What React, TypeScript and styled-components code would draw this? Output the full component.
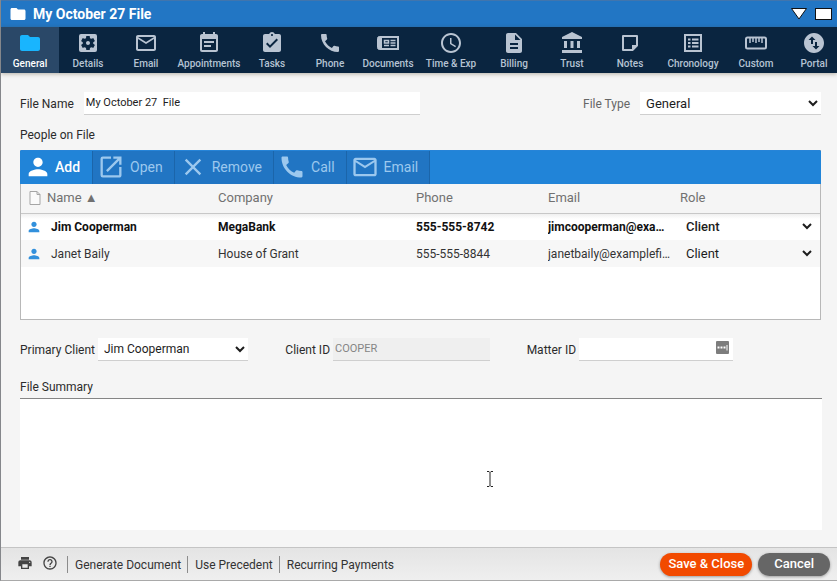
import React from "react";
import styled, { createGlobalStyle, css } from "styled-components";
import {
  MdAccessTime, MdAccountBalance, MdAssignmentTurnedIn, MdCall, MdClose, MdDescription,
  MdEventNote, MdFolder, MdHelpOutline, MdLaunch, MdMailOutline,
  MdPerson, MdPrint, MdSettingsApplications,
  MdSwapVerticalCircle,
} from "react-icons/md";

const GlobalStyle = createGlobalStyle`
  *, *::before, *::after { box-sizing: border-box; }
  body { margin: 0; background: #f5f5f5; }
  body, button, input, select, textarea { font-family: Roboto, "Liberation Sans", sans-serif; }
`;

const Window = styled.div`
  display: flex;
  flex-direction: column;
  min-height: 100vh;
  border-left: 1px solid #85878b;
  border-bottom: 1px solid #a9a9a9;
  background: #f5f5f5;
  color: #2b2b2b;
  font-size: 12px;
  line-height: 16px;
  overflow: hidden;
`;

const TitleBar = styled.header`
  display: flex;
  align-items: center;
  gap: 6px;
  height: 27px;
  padding: 0 5px 0 8px;
  border-top: 1px solid #4175ad;
  background: #2276c4;
  color: #fff;
`;

const Title = styled.h1`
  flex: 1;
  margin: 0;
  font-size: 14px;
  line-height: 20px;
  font-weight: 700;
`;

const WindowButton = styled.button`
  display: flex;
  padding: 0;
  border: 0;
  background: none;
`;

const WindowButtons = styled.div`
  display: flex;
  gap: 7px;
`;

const Nav = styled.nav`
  display: flex;
  height: 46px;
  background: #0a2540;
  box-shadow: 0 1px 4px rgba(60, 50, 20, 0.35);
`;

const NavTab = styled.button<{ $active?: boolean; $wide?: boolean }>`
  display: flex;
  flex: 0 0 ${(p) => (p.$wide ? 68 : 58)}px;
  flex-direction: column;
  align-items: center;
  gap: 2px;
  padding: 4px 0 0;
  border: 0;
  background: ${(p) => (p.$active ? "#2a4868" : "transparent")};
  color: ${(p) => (p.$active ? "#fff" : "#b5c3d3")};
  font-size: 10px;
  line-height: 14px;
  font-weight: 500;
  white-space: nowrap;
  svg {
    width: 24px;
    height: 24px;
    flex: none;
    color: ${(p) => (p.$active ? "#19b5fe" : "#b9c4d2")};
  }
`;

const Form = styled.main`
  display: flex;
  flex: 1;
  flex-direction: column;
  padding: 19px 15px 17px 19px;
`;

const FieldRow = styled.div`
  display: flex;
  align-items: center;
  margin-right: 1px;
`;

const Label = styled.label<{ $muted?: boolean }>`
  color: ${(p) => (p.$muted ? "#666" : "#2b2b2b")};
  white-space: nowrap;
`;

const control = css`
  height: 23px;
  min-width: 0;
  border: 0;
  border-bottom: 1px solid #cfcfcf;
  border-radius: 0;
  outline: 0;
  background: #fff;
  color: #1d1d1d;
`;

const TextInput = styled.input`
  ${control}
  width: 100%;
  padding: 0 2px 2px;
  font-size: 11px;
  &:disabled {
    background: #efefef;
    color: #858585;
  }
`;

const Select = styled.select`
  ${control}
  width: 100%;
  padding: 0 0 0 2px;
  font-size: 12px;
`;

const TypeSelect = styled(Select)`
  font-size: 13px;
`;

const FileField = styled.div`
  display: flex;
  flex: 1;
  align-items: center;
  gap: 10px;
  max-width: 400px;
`;

const TypeField = styled.div`
  display: flex;
  flex: 0 0 238px;
  align-items: center;
  gap: 10px;
  margin-left: auto;
`;

const SectionLabel = styled.h2`
  margin: 12px 0 7px;
  font-size: 12px;
  line-height: 16px;
  font-weight: 400;
`;

const Panel = styled.section`
  min-height: 170px;
  margin-right: 1px;
  border: 1px solid #b8b8b8;
  border-top-color: #2684d8;
  background: #fff;
`;

const Toolbar = styled.div`
  display: flex;
  height: 33px;
  margin: 0 -1px;
  background: #2184d8;
`;

const ToolButton = styled.button<{ $gap: number }>`
  display: flex;
  align-items: center;
  gap: ${(p) => p.$gap}px;
  padding: 0 12px 1px 4px;
  border: 0;
  border-right: 1px solid #1b65aa;
  background: transparent;
  color: #fff;
  font-size: 14px;
  line-height: 18px;
  font-weight: 500;
  svg { width: 28px; height: 28px; }
  &:disabled {
    padding-right: 11px;
    background: #2175c3;
    color: #9cc8ee;
    font-weight: 400;
  }
`;

const Table = styled.table`
  width: 100%;
  border-collapse: collapse;
  table-layout: fixed;
`;

const HeadCell = styled.th<{ $width?: number; $first?: boolean }>`
  width: ${(p) => (p.$width ? `${p.$width}px` : "auto")};
  height: 29px;
  padding: 0 0 1px ${(p) => (p.$first ? 8 : 0)}px;
  border-bottom: 1px solid #c8c8c8;
  background: #f5f5f5;
  color: #717171;
  font-size: 13px;
  font-weight: 400;
  text-align: left;
`;

const NameHead = styled.span`
  display: flex;
  align-items: center;
  gap: 6px;
`;

const Row = styled.tr<{ $primary?: boolean }>`
  background: ${(p) => (p.$primary ? "linear-gradient(#ededed, #fff 6px)" : "#f7f7f7")};
  color: ${(p) => (p.$primary ? "#111" : "#333")};
  font-weight: ${(p) => (p.$primary ? 700 : 400)};
`;

const Cell = styled.td<{ $first?: boolean }>`
  height: 27px;
  padding: 0 9px 0 ${(p) => (p.$first ? 5 : 0)}px;
  overflow: hidden;
  text-overflow: ellipsis;
  white-space: nowrap;
`;

const RoleCell = styled.td`
  padding: 0 5px 0 0;
`;

const RoleSelect = styled(Select)<{ $primary?: boolean }>`
  height: 25px;
  border: 0;
  background: transparent;
  font-size: 13px;
  font-weight: ${(p) => (p.$primary ? 500 : 400)};
`;

const Person = styled.span`
  display: flex;
  align-items: center;
  gap: 9px;
  svg { width: 16px; height: 16px; color: #3290dc; }
`;

const IdRow = styled.div`
  display: grid;
  grid-template-columns: 228fr 204fr 206fr 52fr;
  column-gap: 37px;
  align-items: center;
  margin-top: 18px;
`;

const IdField = styled.div`
  display: flex;
  align-items: center;
  gap: 3px;
  min-width: 0;
`;

const InputWrap = styled.div`
  position: relative;
  flex: 1;
`;

const Autofill = styled.button`
  position: absolute;
  top: 3px;
  right: 4px;
  display: flex;
  padding: 0;
  border: 0;
  background: none;
`;

const SummaryLabel = styled(Label)`
  margin: 18px 0 3px;
`;

const SummaryWrap = styled.div`
  position: relative;
  display: flex;
  flex: 1;
`;

const Summary = styled.textarea`
  flex: 1;
  min-height: 100px;
  padding: 6px;
  border: 0;
  border-top: 1px solid #858585;
  outline: 0;
  background: #fff;
  font-size: 12px;
  resize: none;
`;

const Caret = styled.svg`
  position: absolute;
  top: 73px;
  left: 466px;
  pointer-events: none;
`;

const Footer = styled.footer`
  display: flex;
  align-items: center;
  height: 33px;
  padding: 0 7px 0 16px;
  border-top: 1px solid #c4c4c4;
  background: linear-gradient(#e4e4e4, #efefef);
`;

const IconButton = styled.button`
  display: flex;
  margin-right: 9px;
  padding: 0 0 3px;
  border: 0;
  background: none;
  color: #444;
  svg { width: 16px; height: 16px; }
`;

const FooterLink = styled.button`
  padding: 1px 6px 0 7px;
  border: 0;
  border-left: 1px solid #8c8c8c;
  background: none;
  color: #333;
  font-size: 12px;
  line-height: 16px;
`;

const Pill = styled.button<{ $primary?: boolean }>`
  height: 23px;
  margin-left: ${(p) => (p.$primary ? "auto" : "6px")};
  padding: 0 ${(p) => (p.$primary ? 8 : 16)}px;
  border: 0;
  border-radius: 12px;
  background: ${(p) => (p.$primary ? "#f24a00" : "#666")};
  box-shadow: 0 1px 3px rgba(0, 0, 0, 0.35);
  color: #fff;
  font-size: 13px;
  line-height: 16px;
  font-weight: 500;
`;

const NewspaperIcon = () => (
  <svg viewBox="0 0 24 24" fill="none" stroke="currentColor" aria-hidden="true">
    <path d="M4 5.5H3.5Q1.5 5.5 1.5 7.5V16.5Q1.5 18.5 3.5 18.5H4Z" fill="currentColor" />
    <rect x="5" y="6" width="17" height="12" strokeWidth="2" />
    <rect x="8.5" y="9.5" width="4" height="2.5" strokeWidth="1.5" />
    <path d="M14.5 9.5H19.5M14.5 12H19.5M8 14.5H13M14.5 14.5H19.5" strokeWidth="1.4" />
  </svg>
);

const NoteIcon = () => (
  <svg viewBox="0 0 24 24" fill="none" stroke="currentColor" strokeWidth="2" aria-hidden="true">
    <path d="M5 5H19V14.5L14.5 19H5Z" strokeLinejoin="round" />
    <path d="M14 20V14H20Z" fill="currentColor" stroke="none" />
  </svg>
);

const ChronologyIcon = () => (
  <svg viewBox="0 0 24 24" fill="none" stroke="currentColor" strokeWidth="2" aria-hidden="true">
    <rect x="4" y="4" width="16" height="16" />
    <path d="M7 8.5H9.5M11 8.5H17.5M7 12H9.5M11 12H17.5M7 15.5H9.5M11 15.5H17.5" />
  </svg>
);

const RulerIcon = () => (
  <svg viewBox="0 0 24 24" fill="none" stroke="currentColor" strokeWidth="2" aria-hidden="true">
    <rect x="2" y="6.5" width="20" height="11" rx="1.5" />
    <path d="M6 7V12M9 7V11M12 7V12M15 7V11M18 7V12" strokeWidth="1.5" />
  </svg>
);

const PageIcon = () => (
  <svg width="12" height="14" viewBox="0 0 12 14" fill="#fafafa" stroke="#a5a5a5" aria-hidden="true">
    <path d="M1 .5H8L11 3.5V13.5H1ZM8 .5V3.5H11" />
  </svg>
);

const tabs = [
  { label: "General", icon: <MdFolder />, active: true },
  { label: "Details", icon: <MdSettingsApplications /> },
  { label: "Email", icon: <MdMailOutline /> },
  { label: "Appointments", icon: <MdEventNote />, wide: true },
  { label: "Tasks", icon: <MdAssignmentTurnedIn /> },
  { label: "Phone", icon: <MdCall /> },
  { label: "Documents", icon: <NewspaperIcon /> },
  { label: "Time & Exp", icon: <MdAccessTime />, wide: true },
  { label: "Billing", icon: <MdDescription /> },
  { label: "Trust", icon: <MdAccountBalance /> },
  { label: "Notes", icon: <NoteIcon /> },
  { label: "Chronology", icon: <ChronologyIcon />, wide: true },
  { label: "Custom", icon: <RulerIcon /> },
  { label: "Portal", icon: <MdSwapVerticalCircle /> },
];

const tools = [
  { label: "Add", icon: <MdPerson />, gap: 3, enabled: true },
  { label: "Open", icon: <MdLaunch />, gap: 5 },
  { label: "Remove", icon: <MdClose />, gap: 5 },
  { label: "Call", icon: <MdCall />, gap: 5 },
  { label: "Email", icon: <MdMailOutline />, gap: 5 },
];

const people = [
  { name: "Jim Cooperman", company: "MegaBank", phone: "555-555-8742", email: "jimcooperman@examplefirm.com", primary: true },
  { name: "Janet Baily", company: "House of Grant", phone: "555-555-8844", email: "janetbaily@examplefirm.com", primary: false },
];

export default function App() {
  return (
    <>
      <GlobalStyle />
      <Window>
        <TitleBar>
          <MdFolder size={18} />
          <Title>My October 27 File</Title>
          <WindowButtons>
            <WindowButton aria-label="Minimize">
              <svg width="18" height="14" viewBox="0 0 18 14"><path d="M1.5 1.5H16.5L9 12Z" fill="#fff" stroke="#111" /></svg>
            </WindowButton>
            <WindowButton aria-label="Maximize">
              <svg width="17" height="14" viewBox="0 0 17 14"><rect x=".5" y="1.5" width="16" height="11" fill="#fff" stroke="#111" /></svg>
            </WindowButton>
          </WindowButtons>
        </TitleBar>
        <Nav>
          {tabs.map((t) => (
            <NavTab key={t.label} $active={t.active} $wide={t.wide}>
              {t.icon}
              {t.label}
            </NavTab>
          ))}
        </Nav>
        <Form>
          <FieldRow>
            <FileField>
              <Label htmlFor="file-name">File Name</Label>
              <TextInput id="file-name" defaultValue="My October 27  File" />
            </FileField>
            <TypeField>
              <Label htmlFor="file-type" $muted>File Type</Label>
              <TypeSelect id="file-type"><option>General</option></TypeSelect>
            </TypeField>
          </FieldRow>
          <SectionLabel>People on File</SectionLabel>
          <Panel>
            <Toolbar>
              {tools.map((t) => (
                <ToolButton key={t.label} $gap={t.gap} disabled={!t.enabled}>
                  {t.icon}
                  {t.label}
                </ToolButton>
              ))}
            </Toolbar>
            <Table>
              <thead>
                <tr>
                  <HeadCell $width={197} $first><NameHead><PageIcon />Name ▲</NameHead></HeadCell>
                  <HeadCell $width={198}>Company</HeadCell>
                  <HeadCell $width={132}>Phone</HeadCell>
                  <HeadCell $width={132}>Email</HeadCell>
                  <HeadCell>Role</HeadCell>
                </tr>
              </thead>
              <tbody>
                {people.map((p) => (
                  <Row key={p.name} $primary={p.primary}>
                    <Cell $first><Person><MdPerson />{p.name}</Person></Cell>
                    <Cell>{p.company}</Cell>
                    <Cell>{p.phone}</Cell>
                    <Cell>{p.email}</Cell>
                    <RoleCell>
                      <RoleSelect aria-label={`Role of ${p.name}`} $primary={p.primary}><option>Client</option></RoleSelect>
                    </RoleCell>
                  </Row>
                ))}
              </tbody>
            </Table>
          </Panel>
          <IdRow>
            <IdField>
              <Label htmlFor="primary-client">Primary Client</Label>
              <Select id="primary-client"><option>Jim Cooperman</option></Select>
            </IdField>
            <IdField>
              <Label htmlFor="client-id">Client ID</Label>
              <TextInput id="client-id" defaultValue="COOPER" disabled />
            </IdField>
            <IdField>
              <Label htmlFor="matter-id">Matter ID</Label>
              <InputWrap>
                <TextInput id="matter-id" />
                <Autofill aria-label="Autofill">
                  <svg width="13" height="13" viewBox="0 0 13 13">
                    <rect width="13" height="13" rx="1" fill="#7d7d7d" />
                    <path d="M1.5 5.500H3.500V7.500H1.500ZM4.500 5.500H6.500V7.500H4.500ZM7.500 5.500H9.500V7.500H7.500ZM10.500 4H11.500V9.500H10.500Z" fill="#fff" />
                  </svg>
                </Autofill>
              </InputWrap>
            </IdField>
          </IdRow>
          <SummaryLabel htmlFor="summary">File Summary</SummaryLabel>
          <SummaryWrap>
            <Summary id="summary" />
            <Caret width="8" height="16" viewBox="0 0 8 16" fill="none" stroke="#222" aria-hidden="true">
              <path d="M1 .5H3L4 1.5L5 .5H7M4 1.5V14.5M1 15.5H3L4 14.5L5 15.5H7" />
            </Caret>
          </SummaryWrap>
        </Form>
        <Footer>
          <IconButton aria-label="Print"><MdPrint /></IconButton>
          <IconButton aria-label="Help"><MdHelpOutline /></IconButton>
          <FooterLink>Generate Document</FooterLink>
          <FooterLink>Use Precedent</FooterLink>
          <FooterLink>Recurring Payments</FooterLink>
          <Pill $primary>Save &amp; Close</Pill>
          <Pill>Cancel</Pill>
        </Footer>
      </Window>
    </>
  );
}
